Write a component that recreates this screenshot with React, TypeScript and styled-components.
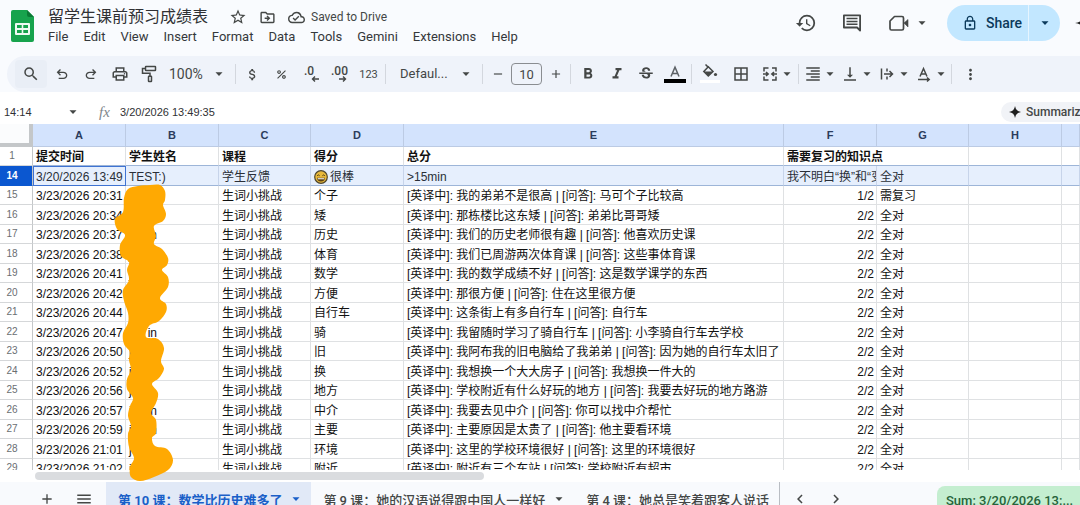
import React from 'react';
import styled, { createGlobalStyle, css } from 'styled-components';
import {
  MdSearch,
  MdOutlinePrint,
  MdAttachMoney,
  MdPercent,
  MdFormatBold,
  MdFormatItalic,
  MdStrikethroughS,
  MdBorderAll,
  MdFormatAlignRight,
  MdVerticalAlignBottom,
  MdMoreVert,
  MdHistory,
  MdStarBorder,
  MdChevronLeft,
  MdChevronRight,
  MdAdd,
  MdRemove,
  MdMenu,
  MdLockOutline,
  MdOutlineDriveFileMove,
  MdOutlineCloudDone,
} from 'react-icons/md';

const UI_FONT = `Roboto, "Noto Sans CJK SC", sans-serif`;
const CELL_FONT = `"Liberation Sans", "Noto Sans CJK SC", sans-serif`;

const GlobalStyle = createGlobalStyle`
  * { box-sizing: border-box; }
  html, body, #root { height: 100%; }
  body {
    margin: 0;
    overflow: hidden;
    background: #f9fbfe;
    color: #444746;
    font-family: ${UI_FONT};
  }
  button, input, select {
    font: inherit;
    color: inherit;
    border: 0;
    margin: 0;
    padding: 0;
    background: none;
  }
  svg { display: block; flex: none; }
`;

/* ---------- shell ---------- */

const Shell = styled.div`
  display: flex;
  flex-direction: column;
  height: 100%;
  overflow: hidden;
`;

const Header = styled.header`
  display: flex;
  flex: none;
  height: 56px;
  padding-left: 11px;
`;

const Logo = styled.div`
  padding-top: 10px;
  margin-right: 14px;
`;

const TitleBlock = styled.div`
  display: flex;
  flex-direction: column;
  padding-top: 5px;
`;

const TitleRow = styled.div`
  display: flex;
  align-items: center;
  height: 24px;
`;

const Title = styled.h1`
  margin: 0 16px 0 0;
  font-size: 16px;
  line-height: 24px;
  font-weight: 400;
  color: #303134;
  white-space: nowrap;
`;

const PlainButton = styled.button<{ $w?: number }>`
  display: flex;
  align-items: center;
  justify-content: center;
  flex: none;
  width: ${(p) => (p.$w ? `${p.$w}px` : 'auto')};
`;

const SaveState = styled.span`
  font-size: 12px;
  line-height: 16px;
  white-space: nowrap;
`;

const Menu = styled.nav`
  display: flex;
  gap: 15px;
`;

const MenuItem = styled.button`
  font-size: 13px;
  line-height: 16px;
  color: #35383b;
`;

const HeaderActions = styled.div`
  display: flex;
  align-items: center;
  height: 46px;
  margin-left: auto;
`;

const MeetButton = styled(PlainButton)`
  gap: 8px;
`;

const ShareGroup = styled.div`
  display: flex;
  height: 36px;
  margin: 0 15px 0 8px;
  border-radius: 18px;
  overflow: hidden;
  background: #c2e7ff;
  color: #0b3a5b;
`;

const ShareButton = styled.button`
  display: flex;
  align-items: center;
  gap: 8px;
  width: 81px;
  padding-left: 15px;
  font-size: 14px;
  font-weight: 500;
`;

const ShareMore = styled.button`
  display: flex;
  align-items: center;
  justify-content: center;
  width: 32px;
  border-left: 1px solid #e6f5ff;
`;

const ClippedButton = styled(PlainButton)`
  justify-content: flex-start;
  overflow: hidden;
`;

/* ---------- toolbar ---------- */

const Toolbar = styled.div`
  display: flex;
  align-items: center;
  flex: none;
  height: 36px;
  margin-left: 7px;
  padding-left: 8px;
  border-radius: 18px 0 0 18px;
  background: #eff3fa;
`;

const Tool = styled.button<{ $w?: number; $shaded?: boolean }>`
  display: flex;
  align-items: center;
  justify-content: center;
  flex: none;
  gap: 3px;
  width: ${(p) => p.$w ?? 29}px;
  height: 28px;
  border-radius: 4px;
  background: ${(p) => (p.$shaded ? '#e9eef6' : 'transparent')};
  font-size: 11px;
`;

const Divider = styled.span`
  flex: none;
  width: 1px;
  height: 20px;
  margin: 0 2px;
  background: #d3d7de;
`;

const SelectBox = styled.label<{ $w: number; $pad: number }>`
  display: flex;
  align-items: center;
  flex: none;
  width: ${(p) => p.$w}px;
  padding: 0 9px 0 ${(p) => p.$pad}px;
`;

const Select = styled.select<{ $size: number }>`
  flex: 1;
  min-width: 0;
  appearance: none;
  font-size: ${(p) => p.$size}px;
  line-height: 20px;
  outline: 0;
`;

const Stepper = styled.div`
  display: flex;
  align-items: center;
  flex: none;
  gap: 1px;
`;

const SizeInput = styled.input`
  width: 31px;
  height: 22px;
  border: 1px solid #8a8d91;
  border-radius: 4px;
  text-align: center;
  font-size: 13px;
`;

/* ---------- formula bar ---------- */

const FormulaBar = styled.div`
  display: flex;
  align-items: center;
  flex: none;
  height: 32px;
  padding: 7px 0 0 4px;
  background: #fff;
`;

const NameBox = styled.input`
  width: 64px;
  font-family: ${CELL_FONT};
  font-size: 11px;
  color: #303134;
`;

const Fx = styled.span`
  width: 21px;
  margin-left: 21px;
  font-family: "Liberation Serif", serif;
  font-style: italic;
  font-size: 15px;
  line-height: 20px;
  color: #80868b;
`;

const FormulaInput = styled.input`
  flex: 1;
  min-width: 0;
  font-family: ${CELL_FONT};
  font-size: 11px;
  color: #303134;
`;

const Summarize = styled.button`
  display: flex;
  align-items: center;
  flex: none;
  gap: 5px;
  width: 79px;
  height: 20px;
  padding-left: 8px;
  border-radius: 10px 0 0 10px;
  background: #f1f3f7;
  font-size: 12px;
  font-weight: 500;
  white-space: nowrap;
  overflow: hidden;
`;

/* ---------- grid ---------- */

const GridArea = styled.main`
  position: relative;
  display: flex;
  flex-direction: column;
  flex: 1;
  min-height: 0;
  overflow: hidden;
  background: #fff;
`;

const TableClip = styled.div`
  flex: 1;
  min-height: 0;
  overflow: hidden;
`;

const Table = styled.table`
  width: 100%;
  table-layout: fixed;
  border-collapse: separate;
  border-spacing: 0;
  font-family: ${CELL_FONT};
  font-size: 12px;
  line-height: 16px;
  color: #111;
  tbody tr:nth-child(odd) { height: 19px; }
  tbody tr:nth-child(even) { height: 20px; }
`;

const Col = styled.col<{ $w?: number }>`
  width: ${(p) => (p.$w ? `${p.$w}px` : 'auto')};
`;

const Corner = styled.td`
  height: 23px;
  padding: 0;
  border-right: 4px solid #c4c7c9;
  border-bottom: 4px solid #c4c7c9;
  background: #fbfcfd;
`;

const ColumnHead = styled.th`
  height: 23px;
  padding: 0;
  border-right: 1px solid #bccbe4;
  border-bottom: 1px solid #bccbe4;
  background: #d3e3fd;
  font-size: 11px;
  font-weight: 700;
  color: #2b3c5c;
`;

const RowHead = styled.th<{ $active?: boolean }>`
  padding: 0 8px 0 0;
  border-right: 1px solid #c4c7c9;
  border-bottom: 1px solid ${(p) => (p.$active ? '#0b57d0' : '#d5d7d9')};
  background: ${(p) => (p.$active ? '#0b57d0' : '#fff')};
  color: ${(p) => (p.$active ? '#fff' : '#6a6e72')};
  font-size: 10px;
  font-weight: ${(p) => (p.$active ? 700 : 400)};
  text-align: center;
`;

type CellKind = 'head' | 'selected' | 'plain';

const Cell = styled.td<{ $kind?: CellKind; $right?: boolean; $focus?: boolean }>`
  padding: 2px 2px 0 3px;
  border-right: 1px solid #dfe1e3;
  border-bottom: 1px solid #dfe1e3;
  overflow: hidden;
  white-space: nowrap;
  text-align: ${(p) => (p.$right ? 'right' : 'left')};
  ${(p) =>
    p.$kind === 'head' &&
    css`
      font-weight: 700;
      border-bottom-color: #9db5d8;
    `}
  ${(p) =>
    p.$kind === 'selected' &&
    css`
      background: #e6effd;
      border-right-color: #c7d4ea;
      border-bottom-color: #9db5d8;
      color: #2a2f38;
    `}
  ${(p) =>
    p.$focus &&
    css`
      border-color: #3f73d2;
      box-shadow: inset 1px 1px 0 #3f73d2;
    `}
`;

const Inline = styled.span`
  display: flex;
  align-items: center;
  gap: 2px;
`;

const NameEnds = styled.span`
  display: flex;
  justify-content: space-between;
  width: 28px;
`;

const Redaction = styled.svg`
  position: absolute;
  top: 0;
  left: 0;
  pointer-events: none;
`;

const ScrollTrack = styled.div`
  flex: none;
  height: 12px;
  padding: 2px 0 2px 35px;
  background: #fff;
`;

const ScrollThumb = styled.div`
  width: 43%;
  height: 8px;
  border-radius: 4px;
  background: #dadcdf;
`;

/* ---------- sheet tabs ---------- */

const SheetBar = styled.footer`
  display: flex;
  flex: none;
  height: 23px;
  padding-left: 32px;
  background: #f8fafd;
`;

const SheetTools = styled.div`
  display: flex;
  height: 34px;
`;

const SheetTab = styled.button<{ $active?: boolean }>`
  display: flex;
  align-items: center;
  flex: none;
  gap: 9px;
  height: 34px;
  padding: 0 10px 0 12px;
  background: ${(p) => (p.$active ? '#e1e9f7' : 'transparent')};
  color: ${(p) => (p.$active ? '#1a5fc8' : '#444746')};
  font-size: 13px;
  font-weight: ${(p) => (p.$active ? 700 : 500)};
  white-space: nowrap;
`;

const TabStrip = styled.div`
  display: flex;
  flex: 0 1 674px;
  min-width: 0;
  height: 34px;
  overflow: hidden;
  border-right: 1px solid #b9bdc3;
`;

const SumButton = styled.button`
  flex: none;
  width: 143px;
  height: 28px;
  margin: 4px 0 0 auto;
  padding-left: 9px;
  border-radius: 8px 0 0 0;
  background: #c4eed0;
  color: #27633a;
  font-size: 13px;
  font-weight: 500;
  text-align: left;
  white-space: nowrap;
`;

/* ---------- drawings ---------- */

const Caret = () => (
  <svg width="10" height="10" viewBox="0 0 10 10" aria-hidden="true">
    <path d="M1.5 3.2h7L5 7z" fill="currentColor" />
  </svg>
);

const Symbol = ({ d, size = 16 }: { d: string; size?: number }) => (
  <svg width={size} height={size} viewBox="0 -980 960 960" fill="currentColor" aria-hidden="true">
    <path d={d} />
  </svg>
);

const UNDO =
  'M280-200v-80h284q63 0 109.5-40T720-420q0-60-46.5-100T564-560H312l104 104-56 56-200-200 200-200 56 56-104 104h252q97 0 166.5 63T800-420q0 94-69.5 157T564-200H280Z';
const REDO =
  'M396-200q-97 0-166.5-63T160-420q0-94 69.5-157T396-640h252L544-744l56-56 200 200-200 200-56-56 104-104H396q-63 0-109.5 40T240-420q0 60 46.5 100T396-280h284v80H396Z';

type LineProps = { w?: number; h?: number; children: React.ReactNode };
const Line = ({ w = 18, h = 18, children }: LineProps) => (
  <svg
    width={w}
    height={h}
    viewBox={`0 0 ${w} ${h}`}
    fill="none"
    stroke="currentColor"
    strokeWidth="1.5"
    aria-hidden="true"
  >
    {children}
  </svg>
);

const SheetsLogo = () => (
  <svg width="23" height="32" viewBox="0 0 23 32" aria-label="Sheets" role="img">
    <path d="M2 0h14l7 7v23a2 2 0 0 1-2 2H2a2 2 0 0 1-2-2V2a2 2 0 0 1 2-2z" fill="#17a34d" />
    <path d="M16 0l7 7h-5a2 2 0 0 1-2-2z" fill="#0b7a35" />
    <rect x="4" y="13" width="15" height="12" rx="1" fill="#effaf2" />
    <path d="M6 15h4.700v3H6zM12.300 15H17v3h-4.700zM6 20h4.700v3H6zM12.300 20H17v3h-4.700z" fill="#17a34d" />
  </svg>
);

const Roller = () => (
  <Line>
    <rect x="5.500" y="1.500" width="10" height="4" rx="0.500" />
    <path d="M5.500 3.500H2.500v4.700h7.500V11" />
    <rect x="8.500" y="11.200" width="3" height="5.300" rx="0.500" />
  </Line>
);

const DecimalArrow = ({ right }: { right?: boolean }) => (
  <svg width="18" height="18" viewBox="0 0 18 18" aria-hidden="true">
    <text
      x={right ? 0 : 2}
      y="10"
      fontFamily="Roboto, sans-serif"
      fontWeight="500"
      fontSize="12"
      fill="currentColor"
    >
      {right ? '.00' : '.0'}
    </text>
    <path
      d={right ? 'M8 14h6.500M12 11.500l2.500 2.500-2.500 2.500' : 'M17 14h-6.500M13 11.500L10.500 14l2.500 2.500'}
      fill="none"
      stroke="currentColor"
      strokeWidth="1.400"
    />
  </svg>
);

const TextColor = () => (
  <svg width="22" height="20" viewBox="0 0 22 20" aria-hidden="true">
    <path d="M7 12.500L11 3.200l4 9.300M8.400 9.500h5.200" fill="none" stroke="#5c6166" strokeWidth="1.500" />
    <rect x="0" y="15" width="22" height="4" fill="#000" />
  </svg>
);

const FillColor = () => (
  <svg width="20" height="20" viewBox="0 0 20 20" aria-hidden="true">
    <path d="M5.500 0.500L8 3" stroke="currentColor" strokeWidth="1.500" />
    <path d="M8.300 2.800L13 7.500 8.300 12 3.800 7.500z" fill="none" stroke="currentColor" strokeWidth="1.500" />
    <path d="M4 7.500h9L8.300 12z" fill="currentColor" />
    <circle cx="15.500" cy="10.500" r="1.600" fill="currentColor" />
    <rect x="0" y="16" width="20" height="3" fill="#fff" />
  </svg>
);

const MergeIcon = () => (
  <Line>
    <path d="M7.500 3H3V6.500M11 3h4v3.500M7.500 15H3v-3.500M11 15h4v-3.500" />
    <path d="M2 9h5M16 9h-5M5 7l2.200 2L5 11M13 7l-2.200 2 2.200 2" />
  </Line>
);

const WrapIcon = () => (
  <Line>
    <path d="M3.500 3.500v11M9 3.500v3M9 11.500v3M6 9h8M11.500 6l3 3-3 3" />
  </Line>
);

const RotateIcon = () => (
  <Line>
    <path d="M5 11.500L8.500 3.500l3.500 8M6.300 9h4.400" />
    <path d="M3 14.500h11M12 12.500l2.200 2-2.200 2" />
  </Line>
);

const CommentIcon = () => (
  <svg width="20" height="20" viewBox="0 0 20 20" fill="none" stroke="currentColor" aria-hidden="true">
    <path d="M1.900 2.400h16.200v15.100l-3-3H1.900z" strokeWidth="1.800" strokeLinejoin="round" />
    <path d="M4.500 5.600h11M4.500 8.400h11M4.500 11.200h11" strokeWidth="1.500" />
  </svg>
);

const VideoIcon = () => (
  <svg width="20" height="18" viewBox="0 0 20 18" fill="none" stroke="currentColor" aria-hidden="true">
    <path
      d="M5.500 2.500h7.500a1.500 1.500 0 0 1 1.500 1.500v10.500a1.500 1.500 0 0 1-1.500 1.500H2.500A1.500 1.500 0 0 1 1 14.500V7z"
      strokeWidth="1.700"
      strokeLinejoin="round"
    />
    <path d="M15 9l4-3.500v7.500z" fill="currentColor" strokeWidth="0.600" />
  </svg>
);

const Spark = ({ size }: { size: number }) => (
  <svg width={size} height={size} viewBox="0 0 12 12" aria-hidden="true">
    <path d="M6 0Q6.700 5.300 12 6 6.700 6.700 6 12 5.300 6.700 0 6 5.300 5.300 6 0z" fill="#1f1f1f" />
  </svg>
);

const Grin = () => (
  <svg width="14" height="14" viewBox="0 0 14 14" role="img" aria-label="grinning face">
    <circle cx="7" cy="7" r="6.300" fill="#e8b93c" stroke="#4e4630" strokeWidth="1.200" />
    <path d="M3.200 5.700q1.200-1.500 2.400 0M8.400 5.700q1.200-1.500 2.400 0" fill="none" stroke="#4e3b12" />
    <path d="M3 7.700h8a4 3.700 0 0 1-8 0z" fill="#5a4216" />
    <path d="M3.700 8.200h6.600v1H3.900z" fill="#fff" />
  </svg>
);

/* Closed curve through a list of points, in table coordinates. */
const smoothPath = (pts: number[][]) => {
  const n = pts.length;
  let d = `M${pts[0][0]} ${pts[0][1]}`;
  for (let i = 0; i < n; i += 1) {
    const a = pts[(i + n - 1) % n];
    const b = pts[i];
    const c = pts[(i + 1) % n];
    const e = pts[(i + 2) % n];
    d += `C${b[0] + (c[0] - a[0]) / 6} ${b[1] + (c[1] - a[1]) / 6} ${c[0] - (e[0] - b[0]) / 6} ${
      c[1] - (e[1] - b[1]) / 6
    } ${c[0]} ${c[1]}`;
  }
  return `${d}Z`;
};

const SCRIBBLE = smoothPath([
  [128, 65], [138, 62], [150, 61], [160, 61], [165, 67], [165, 76], [163, 81], [166, 90], [163, 97],
  [154, 102], [156, 112], [154, 120], [162, 125], [168, 134], [167, 141], [162, 146], [168, 153],
  [168, 163], [160, 174], [166, 180], [166, 188], [159, 197], [149, 202], [146, 213], [158, 215],
  [164, 224], [161, 237], [164, 245], [159, 254], [152, 260], [158, 269], [156, 279], [151, 289],
  [156, 296], [156, 309], [152, 314], [155, 322], [167, 325], [173, 336], [168, 346], [154, 353],
  [140, 357], [131, 353], [130, 343], [134, 334], [129, 323], [128, 310], [131, 302], [128, 292],
  [130, 282], [133, 274], [127, 265], [127, 255], [131, 246], [129, 236], [130, 228], [124, 220],
  [123, 209], [128, 199], [128, 189], [124, 177], [123, 166], [129, 156], [127, 146], [129, 138],
  [121, 132], [120, 121], [125, 111], [117, 105], [115, 95], [123, 88], [124, 74],
]);

/* ---------- data ---------- */

const MENUS = ['File', 'Edit', 'View', 'Insert', 'Format', 'Data', 'Tools', 'Gemini', 'Extensions', 'Help'];
const COLUMNS = ['A', 'B', 'C', 'D', 'E', 'F', 'G', 'H', ''];
const WIDTHS = [33, 93, 93, 92, 93, 380, 93, 92, 93];

type Row = { n: number; time: string; ends: [string, string]; word: string; text: string; score: string; note: string };

const row = (
  n: number,
  time: string,
  ends: [string, string],
  word: string,
  first: string,
  second: string,
  score = '2/2',
  note = '全对',
): Row => ({ n, time: `3/23/2026 ${time}`, ends, word, text: `[英译中]: ${first} | [问答]: ${second}`, score, note });

const ROWS: Row[] = [
  row(15, '20:31', ['', ''], '个子', '我的弟弟不是很高', '马可个子比较高', '1/2', '需复习'),
  row(16, '20:34', ['', ''], '矮', '那栋楼比这东矮', '弟弟比哥哥矮'),
  row(17, '20:37', ['', 'n'], '历史', '我们的历史老师很有趣', '他喜欢历史课'),
  row(18, '20:38', ['j', ''], '体育', '我们已周游两次体育课', '这些事体育课'),
  row(19, '20:41', ['j', ''], '数学', '我的数学成绩不好', '这是数学课学的东西'),
  row(20, '20:42', ['', ''], '方便', '那很方便', '住在这里很方便'),
  row(21, '20:44', ['', ''], '自行车', '这条街上有多自行车', '自行车'),
  row(22, '20:47', ['', 'in'], '骑', '我留随时学习了骑自行车', '小李骑自行车去学校'),
  row(23, '20:50', ['j', ''], '旧', '我阿布我的旧电脑给了我弟弟', '因为她的自行车太旧了'),
  row(24, '20:52', ['i', ''], '换', '我想换一个大大房子', '我想换一件大的'),
  row(25, '20:56', ['j', ''], '地方', '学校附近有什么好玩的地方', '我要去好玩的地方路游'),
  row(26, '20:57', ['i', 'n'], '中介', '我要去见中介', '你可以找中介帮忙'),
  row(27, '20:59', ['i', 'n'], '主要', '主要原因是太贵了', '他主要看环境'),
  row(28, '21:01', ['j', ''], '环境', '这里的学校环境很好', '这里的环境很好'),
  row(29, '21:02', ['i', ''], '附近', '附近有三个车站', '学校附近有超市'),
];

/* ---------- page ---------- */

export default function App() {
  return (
    <Shell>
      <GlobalStyle />
      <Header>
        <Logo>
          <SheetsLogo />
        </Logo>
        <TitleBlock>
          <TitleRow>
            <Title>留学生课前预习成绩表</Title>
            <PlainButton $w={28} aria-label="Star"><MdStarBorder size={18} /></PlainButton>
            <PlainButton $w={30} aria-label="Move"><MdOutlineDriveFileMove size={17} /></PlainButton>
            <PlainButton $w={29} aria-label="Document status"><MdOutlineCloudDone size={17} /></PlainButton>
            <SaveState>Saved to Drive</SaveState>
          </TitleRow>
          <Menu>
            {MENUS.map((m) => (
              <MenuItem key={m}>{m}</MenuItem>
            ))}
          </Menu>
        </TitleBlock>
        <HeaderActions>
          <PlainButton $w={44} aria-label="History"><MdHistory size={22} /></PlainButton>
          <PlainButton $w={48} aria-label="Comments"><CommentIcon /></PlainButton>
          <MeetButton $w={63} aria-label="Meet"><VideoIcon /><Caret /></MeetButton>
          <ShareGroup>
            <ShareButton><MdLockOutline size={16} />Share</ShareButton>
            <ShareMore aria-label="Share options"><Caret /></ShareMore>
          </ShareGroup>
          <ClippedButton $w={5} aria-label="Ask Gemini"><Spark size={20} /></ClippedButton>
        </HeaderActions>
      </Header>

      <Toolbar role="toolbar">
        <Tool $w={32} $shaded aria-label="Search"><MdSearch size={18} /></Tool>
        <Tool aria-label="Undo"><Symbol d={UNDO} /></Tool>
        <Tool aria-label="Redo"><Symbol d={REDO} /></Tool>
        <Tool aria-label="Print"><MdOutlinePrint size={18} /></Tool>
        <Tool aria-label="Paint format"><Roller /></Tool>
        <SelectBox $w={70} $pad={6}>
          <Select $size={14} aria-label="Zoom" defaultValue="100%"><option>100%</option></Select>
          <Caret />
        </SelectBox>
        <Divider />
        <Tool aria-label="Currency"><MdAttachMoney size={15} /></Tool>
        <Tool aria-label="Percent"><MdPercent size={13} /></Tool>
        <Tool aria-label="Decrease decimals"><DecimalArrow /></Tool>
        <Tool aria-label="Increase decimals"><DecimalArrow right /></Tool>
        <Tool>123</Tool>
        <Divider />
        <SelectBox $w={92} $pad={12}>
          <Select $size={13} aria-label="Font" defaultValue="Defaul..."><option>Defaul...</option></Select>
          <Caret />
        </SelectBox>
        <Divider />
        <Stepper>
          <Tool $w={25} aria-label="Smaller"><MdRemove size={14} /></Tool>
          <SizeInput aria-label="Font size" defaultValue="10" />
          <Tool $w={25} aria-label="Larger"><MdAdd size={14} /></Tool>
        </Stepper>
        <Divider />
        <Tool aria-label="Bold"><MdFormatBold size={18} /></Tool>
        <Tool aria-label="Italic"><MdFormatItalic size={18} /></Tool>
        <Tool aria-label="Strikethrough"><MdStrikethroughS size={18} /></Tool>
        <Tool aria-label="Text color"><TextColor /></Tool>
        <Divider />
        <Tool $w={31} aria-label="Fill color"><FillColor /></Tool>
        <Tool $w={31} aria-label="Borders"><MdBorderAll size={18} /></Tool>
        <Tool $w={40} aria-label="Merge"><MergeIcon /><Caret /></Tool>
        <Divider />
        <Tool $w={37} aria-label="Horizontal align"><MdFormatAlignRight size={18} /><Caret /></Tool>
        <Tool $w={37} aria-label="Vertical align"><MdVerticalAlignBottom size={18} /><Caret /></Tool>
        <Tool $w={37} aria-label="Wrapping"><WrapIcon /><Caret /></Tool>
        <Tool $w={37} aria-label="Rotation"><RotateIcon /><Caret /></Tool>
        <Divider />
        <Tool $w={32} aria-label="More"><MdMoreVert size={17} /></Tool>
      </Toolbar>

      <FormulaBar>
        <NameBox aria-label="Name box" defaultValue="14:14" />
        <Caret />
        <Fx>fx</Fx>
        <FormulaInput aria-label="Formula" defaultValue="3/20/2026 13:49:35" />
        <Summarize><Spark size={12} />Summarize</Summarize>
      </FormulaBar>

      <GridArea>
        <TableClip>
          <Table>
            <colgroup>
              {WIDTHS.map((w, i) => (
                <Col key={i} $w={w} />
              ))}
              <Col />
            </colgroup>
            <thead>
              <tr>
                <Corner />
                {COLUMNS.map((c, i) => (
                  <ColumnHead key={i} scope="col">{c}</ColumnHead>
                ))}
              </tr>
            </thead>
            <tbody>
              <tr>
                <RowHead scope="row">1</RowHead>
                <Cell $kind="head">提交时间</Cell>
                <Cell $kind="head">学生姓名</Cell>
                <Cell $kind="head">课程</Cell>
                <Cell $kind="head">得分</Cell>
                <Cell $kind="head">总分</Cell>
                <Cell $kind="head" colSpan={2}>需要复习的知识点</Cell>
                <Cell $kind="head" />
                <Cell $kind="head" />
              </tr>
              <tr>
                <RowHead scope="row" $active>14</RowHead>
                <Cell $kind="selected" $focus>3/20/2026 13:49</Cell>
                <Cell $kind="selected">TEST:)</Cell>
                <Cell $kind="selected">学生反馈</Cell>
                <Cell $kind="selected"><Inline><Grin />很棒</Inline></Cell>
                <Cell $kind="selected">&gt;15min</Cell>
                <Cell $kind="selected">我不明白“换”和“变</Cell>
                <Cell $kind="selected">全对</Cell>
                <Cell $kind="selected" />
                <Cell $kind="selected" />
              </tr>
              {ROWS.map((r) => (
                <tr key={r.n}>
                  <RowHead scope="row">{r.n}</RowHead>
                  <Cell>{r.time}</Cell>
                  <Cell><NameEnds><span>{r.ends[0]}</span><span>{r.ends[1]}</span></NameEnds></Cell>
                  <Cell>生词小挑战</Cell>
                  <Cell>{r.word}</Cell>
                  <Cell>{r.text}</Cell>
                  <Cell $right>{r.score}</Cell>
                  <Cell>{r.note}</Cell>
                  <Cell />
                  <Cell />
                </tr>
              ))}
            </tbody>
          </Table>
        </TableClip>
        <ScrollTrack><ScrollThumb /></ScrollTrack>
        <Redaction width="180" height="360" viewBox="0 0 180 360" aria-hidden="true">
          <path d={SCRIBBLE} fill="#ffa902" />
        </Redaction>
      </GridArea>

      <SheetBar>
        <SheetTools>
          <PlainButton $w={30} aria-label="Add sheet"><MdAdd size={16} /></PlainButton>
          <PlainButton $w={44} aria-label="All sheets"><MdMenu size={18} /></PlainButton>
        </SheetTools>
        <TabStrip>
          <SheetTab $active>第 10 课：数学比历史难多了<Caret /></SheetTab>
          <SheetTab>第 9 课：她的汉语说得跟中国人一样好<Caret /></SheetTab>
          <SheetTab>第 4 课：她总是笑着跟客人说话</SheetTab>
        </TabStrip>
        <SheetTools>
          <PlainButton $w={40} aria-label="Previous"><MdChevronLeft size={18} /></PlainButton>
          <PlainButton $w={32} aria-label="Next"><MdChevronRight size={18} /></PlainButton>
        </SheetTools>
        <SumButton>Sum: 3/20/2026 13:...</SumButton>
      </SheetBar>
    </Shell>
  );
}
